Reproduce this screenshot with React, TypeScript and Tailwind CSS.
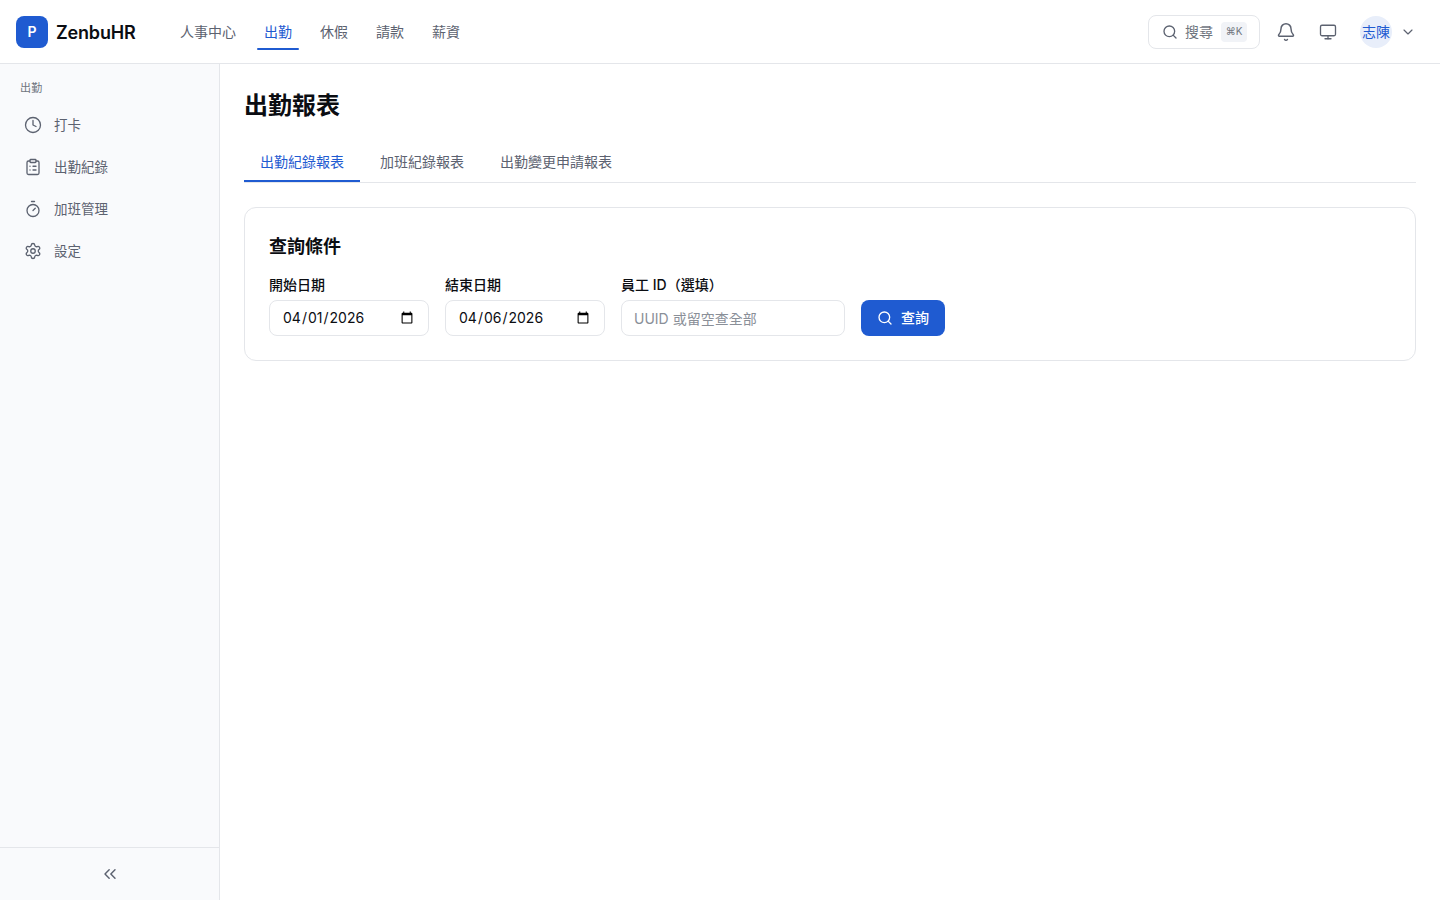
import React from "react";
import { Bell, ChevronDown, ChevronsLeft, Clock, ClipboardList, Monitor, Search, Settings, Timer } from "lucide-react";

const topNav = [
    { label: "人事中心" },
    { label: "出勤", active: true },
    { label: "休假" },
    { label: "請款" },
    { label: "薪資" },
];

const sideNav = [
    { label: "打卡", icon: Clock },
    { label: "出勤紀錄", icon: ClipboardList },
    { label: "加班管理", icon: Timer },
    { label: "設定", icon: Settings },
];

const tabs = [
    { label: "出勤紀錄報表", active: true },
    { label: "加班紀錄報表" },
    { label: "出勤變更申請報表" },
];

const App = () => {
    return (
        <div className="flex h-screen flex-col overflow-hidden bg-white font-['Inter','Noto_Sans_CJK_TC',sans-serif] text-[#0b0d12]">
            <header className="flex h-16 shrink-0 items-center border-b border-[#e4e6ea] bg-white pl-4 pr-6">
                <div className="flex w-[157px] items-center gap-2">
                    <div className="flex h-8 w-8 items-center justify-center rounded-lg bg-[#1f5bd1] text-sm font-semibold text-white">P</div>
                    <span className="translate-y-px text-lg font-semibold tracking-[-0.01em]">ZenbuHR</span>
                </div>
                <nav className="flex h-full items-center gap-[14px]">
                    {topNav.map((item) => (
                        <div key={item.label} className="relative flex h-9 items-center px-[7px]">
                            <span className={`text-sm ${item.active ? "text-[#1f5bd1]" : "text-[#5c6270]"}`}>{item.label}</span>
                            {item.active && <span className="absolute inset-x-0 bottom-0 h-[2px] rounded bg-[#1f5bd1]" />}
                        </div>
                    ))}
                </nav>
                <div className="ml-auto flex items-center">
                    <div className="flex h-[34px] w-[112px] items-center rounded-lg border border-[#e4e6ea] pl-[13px]">
                        <Search size={16} className="text-[#5c6270]" />
                        <span className="ml-[7px] text-sm text-[#70767f]">搜尋</span>
                        <kbd className="ml-2 flex h-5 w-[26px] items-center justify-center rounded bg-[#f1f3f7] font-['Inter','Noto_Sans_CJK_TC',sans-serif] text-[10px] text-[#70767f]">⌘K</kbd>
                    </div>
                    <Bell size={20} strokeWidth={1.75} className="ml-4 text-[#5c6270]" />
                    <Monitor size={18} strokeWidth={1.75} className="ml-[23px] text-[#5c6270]" />
                    <div className="ml-[23px] flex h-8 w-8 items-center justify-center whitespace-nowrap rounded-full bg-[#e8eefa] text-sm text-[#1f5bd1]">志陳</div>
                    <ChevronDown size={16} strokeWidth={1.75} className="ml-2 text-[#5c6270]" />
                </div>
            </header>

            <div className="flex min-h-0 flex-1">
                <aside className="flex w-[220px] shrink-0 flex-col border-r border-[#e4e6ea] bg-[#f9fafc]">
                    <div className="flex-1 px-3 pt-[17px]">
                        <div className="mb-[10px] px-2 text-[11px] leading-[14px] tracking-[0.025em] text-[#70767f]">出勤</div>
                        <div className="flex flex-col gap-[2px]">
                            {sideNav.map((item) => (
                                <div key={item.label} className="flex h-10 items-center gap-3 px-3 text-[13.5px] text-[#5c6270]">
                                    <item.icon size={18} strokeWidth={1.75} />
                                    <span>{item.label}</span>
                                </div>
                            ))}
                        </div>
                    </div>
                    <div className="flex h-[53px] items-center justify-center border-t border-[#e4e6ea]">
                        <ChevronsLeft size={20} strokeWidth={1.75} className="text-[#5c6270]" />
                    </div>
                </aside>

                <main className="min-w-0 flex-1 px-6 pt-6">
                    <h1 className="text-2xl font-bold leading-9">出勤報表</h1>
                    <div className="mt-5 flex gap-1 border-b border-[#e4e6ea]">
                        {tabs.map((tab) => (
                            <div key={tab.label} className={`flex h-[38px] items-center border-b-2 px-4 text-sm ${tab.active ? "border-[#1f5bd1] text-[#1f5bd1]" : "border-transparent text-[#5c6270]"}`}>
                                {tab.label}
                            </div>
                        ))}
                    </div>

                    <section className="mt-6 rounded-xl border border-[#e4e6ea] bg-white p-6">
                        <h2 className="mt-px text-lg font-semibold leading-7">查詢條件</h2>
                        <div className="mt-[14px] flex items-end gap-4">
                            <label className="flex flex-col gap-[5px]">
                                <span className="text-sm font-medium leading-5">開始日期</span>
                                <input type="date" defaultValue="2026-04-01" className="h-9 w-40 rounded-lg border border-[#e4e6ea] px-3 text-sm outline-none" />
                            </label>
                            <label className="flex flex-col gap-[5px]">
                                <span className="text-sm font-medium leading-5">結束日期</span>
                                <input type="date" defaultValue="2026-04-06" className="h-9 w-40 rounded-lg border border-[#e4e6ea] px-3 text-sm outline-none" />
                            </label>
                            <label className="flex flex-col gap-[5px]">
                                <span className="text-sm font-medium leading-5">員工 ID（選填）</span>
                                <input placeholder="UUID 或留空查全部" className="h-9 w-56 rounded-lg border border-[#e4e6ea] px-3 text-sm outline-none placeholder:text-[#8a8f98]" />
                            </label>
                            <button className="flex h-9 w-[84px] items-center justify-center gap-2 rounded-lg bg-[#1f5bd1] text-sm font-medium text-white">
                                <Search size={16} />
                                查詢
                            </button>
                        </div>
                    </section>
                </main>
            </div>
        </div>
    );
};

export default App;
